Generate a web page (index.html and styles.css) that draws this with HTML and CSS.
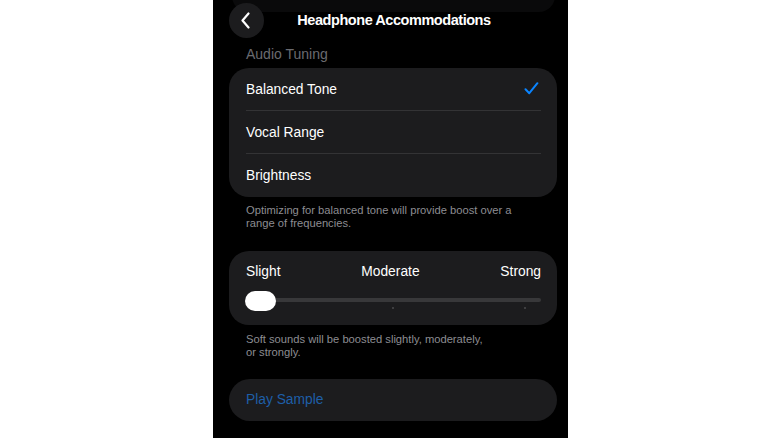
FILE: index.html
```html
<!DOCTYPE html>
<html lang="en">
<head>
<meta charset="utf-8">
<title>Headphone Accommodations</title>
<link rel="stylesheet" href="styles.css">
</head>
<body>
<div class="phone">
  <div class="ghost-card"></div>
  <header class="nav">
    <button class="back" aria-label="Back">
      <svg width="12" height="17" viewBox="0 0 12 17"><path d="M8.5 1.5 L2.5 8.5 L8.5 15.5" fill="none" stroke="#fff" stroke-width="2.2" stroke-linecap="round" stroke-linejoin="round"/></svg>
    </button>
    <h1 class="title">Headphone Accommodations</h1>
  </header>

  <div class="section-label">Audio Tuning</div>
  <div class="card list">
    <div class="row"><span>Balanced Tone</span>
      <svg class="check" width="15" height="13" viewBox="0 0 15 13"><path d="M1.5 7.3 L5.3 11.2 L13.4 1.2" fill="none" stroke="#0a84ff" stroke-width="2" stroke-linecap="round" stroke-linejoin="round"/></svg>
    </div>
    <div class="row"><span>Vocal Range</span></div>
    <div class="row"><span>Brightness</span></div>
  </div>
  <p class="footnote first">Optimizing for balanced tone will provide boost over a<br>range of frequencies.</p>

  <div class="card slider-card">
    <div class="labels"><span>Slight</span><span>Moderate</span><span>Strong</span></div>
    <div class="slider">
      <div class="track"></div>
      <span class="tick t2"></span>
      <span class="tick t3"></span>
      <div class="thumb"></div>
    </div>
  </div>
  <p class="footnote second">Soft sounds will be boosted slightly, moderately,<br>or strongly.</p>

  <div class="card play"><span>Play Sample</span></div>
</div>
</body>
</html>
```

FILE: styles.css
```css
* { box-sizing: border-box; }
html, body { margin: 0; padding: 0; }
body {
  background: #ffffff;
  width: 780px;
  height: 438px;
  overflow: hidden;
  font-family: "Liberation Sans", Arial, sans-serif;
}
.phone {
  position: relative;
  margin-left: 213px;
  width: 355px;
  height: 438px;
  background: #000000;
  overflow: hidden;
  display: flex;
  flex-direction: column;
  padding: 0 11px 0 16px;
}
.ghost-card {
  position: absolute;
  left: 19px;
  top: -30px;
  width: 323px;
  height: 42px;
  border-radius: 16px;
  background: #0a0a0b;
}
.nav {
  position: relative;
  height: 40px;
  display: flex;
  align-items: center;
  justify-content: center;
}
.back {
  position: absolute;
  left: 0;
  top: 2.5px;
  width: 35px;
  height: 35px;
  border-radius: 50%;
  border: none;
  padding: 0 2px 0 0;
  background: #1c1c1e;
  display: flex;
  align-items: center;
  justify-content: center;
}
.title {
  margin: 0 0 0 2px;
  color: #ffffff;
  font-size: 14.5px;
  font-weight: bold;
  letter-spacing: -0.45px;
  line-height: 18px;
}
.section-label {
  padding: 5px 0 0 17px;
  margin-bottom: 5px;
  line-height: 18px;
  font-size: 14px;
  color: #6b6b70;
}
.card {
  background: #1c1c1e;
  border-radius: 20px;
}
.list { padding-left: 17px; }
.row {
  height: 43px;
  display: flex;
  align-items: center;
  justify-content: space-between;
  color: #ffffff;
  font-size: 13.8px;
  border-bottom: 1px solid #333335;
  margin-right: 16px;
  padding-right: 2px;
}
.row:last-child { border-bottom: none; }
.check { margin-top: -1px; }
.footnote {
  margin: 0;
  padding-left: 17px;
  font-size: 11.2px;
  line-height: 13.5px;
  color: #8d8d92;
}
.footnote.first { padding-top: 6.5px; margin-bottom: 20px; }
.footnote.second { padding-top: 8px; margin-bottom: 19px; }
.slider-card {
  height: 74px;
  padding: 12px 16px 0 17px;
}
.labels {
  display: flex;
  justify-content: space-between;
  color: #ffffff;
  font-size: 13.8px;
  line-height: 18px;
}
.slider {
  position: relative;
  height: 30px;
  margin-top: 10px;
}
.track {
  position: absolute;
  left: 0;
  right: 0;
  top: 7.5px;
  height: 4px;
  border-radius: 2px;
  background: #38383a;
}
.tick {
  position: absolute;
  top: 16px;
  width: 2px;
  height: 2px;
  border-radius: 1px;
  background: #4a4a4d;
}
.t2 { left: 146px; }
.t3 { left: 278px; }
.thumb {
  position: absolute;
  left: -1px;
  top: 0;
  width: 31px;
  height: 20px;
  border-radius: 10px;
  background: #ffffff;
}
.play {
  height: 42px;
  border-radius: 21px;
  padding-left: 17px;
  display: flex;
  align-items: center;
  color: #1e5fa8;
  font-size: 13.8px;
}
```
